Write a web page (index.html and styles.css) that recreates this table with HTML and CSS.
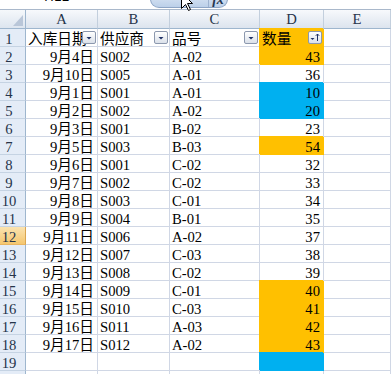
FILE: index.html
```html
<!DOCTYPE html>
<html lang="zh">
<head>
<meta charset="utf-8">
<title>Sheet</title>
<link rel="stylesheet" href="styles.css">
</head>
<body>
<div class="topbar">
  <div class="namebox"><span class="nametext">H12</span></div>
  <div class="fxtab"><div class="fxleft"></div><div class="fxright"><span class="fxtext">fx</span></div></div>
  <svg class="cursor" width="13" height="20" viewBox="0 0 13 20"><path d="M0.5 0.5 L0.5 16.5 L4.5 12.5 L7.5 18.5 L9.5 17.5 L6.5 11.5 L11.5 11.5 Z" fill="#fff" stroke="#000" stroke-width="1"/></svg>
</div>
<div class="sheet">
  <div class="corner"><svg width="25" height="18" viewBox="0 0 25 18"><path d="M23 5 L23 16 L13 16 Z" fill="#b9c6d8"/></svg></div>
  <div class="ch">A</div><div class="ch">B</div><div class="ch">C</div><div class="ch">D</div><div class="ch">E</div>

  <div class="rh">1</div>
  <div class="c">入库日期<span class="fbtn"><svg width="12" height="11" viewBox="0 0 12 11"><path d="M3.5 5 H8.5 L6 7.5 Z" fill="#1f3166"/></svg></span></div>
  <div class="c">供应商<span class="fbtn"><svg width="12" height="11" viewBox="0 0 12 11"><path d="M3.5 5 H8.5 L6 7.5 Z" fill="#1f3166"/></svg></span></div>
  <div class="c">品号<span class="fbtn"><svg width="12" height="11" viewBox="0 0 12 11"><path d="M3.5 5 H8.5 L6 7.5 Z" fill="#1f3166"/></svg></span></div>
  <div class="c o">数量<span class="fbtn"><svg width="12" height="11" viewBox="0 0 12 11"><path d="M1.5 6 H5.5 L3.5 8 Z" fill="#1f3166"/><path d="M8.5 9 V2 M6.8 3.8 L8.5 2 L10.2 3.8" fill="none" stroke="#1f3166" stroke-width="1"/></svg></span></div>
  <div class="c"></div>

  <div class="rh">2</div><div class="c r">9月4日</div><div class="c">S002</div><div class="c">A-02</div><div class="c r o">43</div><div class="c"></div>
  <div class="rh">3</div><div class="c r">9月10日</div><div class="c">S005</div><div class="c">A-01</div><div class="c r">36</div><div class="c"></div>
  <div class="rh">4</div><div class="c r">9月1日</div><div class="c">S001</div><div class="c">A-01</div><div class="c r b">10</div><div class="c"></div>
  <div class="rh">5</div><div class="c r">9月2日</div><div class="c">S002</div><div class="c">A-02</div><div class="c r b">20</div><div class="c"></div>
  <div class="rh">6</div><div class="c r">9月3日</div><div class="c">S001</div><div class="c">B-02</div><div class="c r">23</div><div class="c"></div>
  <div class="rh">7</div><div class="c r">9月5日</div><div class="c">S003</div><div class="c">B-03</div><div class="c r o">54</div><div class="c"></div>
  <div class="rh">8</div><div class="c r">9月6日</div><div class="c">S001</div><div class="c">C-02</div><div class="c r">32</div><div class="c"></div>
  <div class="rh">9</div><div class="c r">9月7日</div><div class="c">S002</div><div class="c">C-02</div><div class="c r">33</div><div class="c"></div>
  <div class="rh">10</div><div class="c r">9月8日</div><div class="c">S003</div><div class="c">C-01</div><div class="c r">34</div><div class="c"></div>
  <div class="rh">11</div><div class="c r">9月9日</div><div class="c">S004</div><div class="c">B-01</div><div class="c r">35</div><div class="c"></div>
  <div class="rh sel">12</div><div class="c r">9月11日</div><div class="c">S006</div><div class="c">A-02</div><div class="c r">37</div><div class="c"></div>
  <div class="rh">13</div><div class="c r">9月12日</div><div class="c">S007</div><div class="c">C-03</div><div class="c r">38</div><div class="c"></div>
  <div class="rh">14</div><div class="c r">9月13日</div><div class="c">S008</div><div class="c">C-02</div><div class="c r">39</div><div class="c"></div>
  <div class="rh">15</div><div class="c r">9月14日</div><div class="c">S009</div><div class="c">C-01</div><div class="c r o">40</div><div class="c"></div>
  <div class="rh">16</div><div class="c r">9月15日</div><div class="c">S010</div><div class="c">C-03</div><div class="c r o">41</div><div class="c"></div>
  <div class="rh">17</div><div class="c r">9月16日</div><div class="c">S011</div><div class="c">A-03</div><div class="c r o">42</div><div class="c"></div>
  <div class="rh">18</div><div class="c r">9月17日</div><div class="c">S012</div><div class="c">A-02</div><div class="c r o">43</div><div class="c"></div>
  <div class="rh">19</div><div class="c"></div><div class="c"></div><div class="c"></div><div class="c b"></div><div class="c"></div>
  <div class="rh"></div><div class="c"></div><div class="c"></div><div class="c"></div><div class="c"></div><div class="c"></div>
</div>
</body>
</html>
```
FILE: styles.css
```css
html, body {
  margin: 0;
  padding: 0;
  background: #ffffff;
}
body {
  width: 391px;
  height: 374px;
  overflow: hidden;
  font-family: "Liberation Serif", "Noto Sans CJK SC", serif;
  font-size: 14.67px;
  color: #000;
}

/* top strip: name box + formula button */
.topbar {
  position: relative;
  height: 9px;
  border-bottom: 1px solid #a9b8cb;
  display: flex;
  align-items: flex-start;
  background: #ffffff;
}
.namebox {
  width: 114px;
  height: 9px;
  overflow: hidden;
  text-align: center;
}
.nametext {
  display: block;
  margin-top: -10px;
  font-family: "Liberation Sans", sans-serif;
  font-size: 13px;
  line-height: 14px;
  letter-spacing: 0.5px;
}
.fxtab {
  margin-left: 36px;
  margin-top: -10px;
  width: 78px;
  height: 18px;
  box-sizing: border-box;
  border: 1px solid #8ea6c6;
  border-top: none;
  border-radius: 0 0 9px 9px;
  background: linear-gradient(#e4edf8, #bcd0e9);
  display: flex;
  overflow: hidden;
}
.fxleft {
  width: 57px;
  border-right: 1px solid #9db2cf;
}
.fxright {
  flex: 1;
  text-align: center;
}
.fxtext {
  display: block;
  margin-top: 3px;
  font-family: "Liberation Serif", serif;
  font-style: italic;
  font-weight: bold;
  font-size: 14px;
  line-height: 14px;
  color: #24364f;
}
.cursor {
  position: absolute;
  left: 181px;
  top: -8px;
}

/* sheet grid */
.sheet {
  display: grid;
  grid-template-columns: 26px 72px 72px 90px 64px 67px;
  grid-template-rows: 19px;
  grid-auto-rows: 18px;
}
.corner {
  box-sizing: border-box;
  background: linear-gradient(#f5f8fb, #dde5ef);
  border-right: 1px solid #9eb6ce;
  border-bottom: 1px solid #9eb6ce;
}
.corner svg {
  display: block;
}
.ch {
  box-sizing: border-box;
  background: linear-gradient(#f7f9fc, #dce4ee);
  border-right: 1px solid #c3cfdd;
  border-bottom: 1px solid #9eb6ce;
  text-align: center;
  line-height: 16px;
  padding-top: 1px;
  color: #26344a;
}
.rh {
  box-sizing: border-box;
  background: #e4ecf7;
  border-right: 1px solid #9eb6ce;
  border-bottom: 1px solid #c5d3e3;
  text-align: center;
  padding-right: 7px;
  line-height: 17px;
  padding-top: 2px;
  color: #26344a;
}
.rh.sel {
  background: linear-gradient(#fbe3b0, #f5c770);
  border-bottom-color: #e9b562;
  border-right-color: #d9a550;
}
.c {
  position: relative;
  box-sizing: border-box;
  border-right: 1px solid #d0d7e5;
  border-bottom: 1px solid #d0d7e5;
  padding: 2px 3px 0 2px;
  line-height: 17px;
  white-space: nowrap;
}
.c.r {
  text-align: right;
}
.c.o {
  background: #ffc000;
  border-color: #ffc000;
  box-shadow: -1px -1px 0 0 #ffc000;
}
.c.b {
  background: #00b0f0;
  border-color: #00b0f0;
  box-shadow: -1px -1px 0 0 #00b0f0;
}

/* autofilter buttons */
.fbtn {
  position: absolute;
  right: 1px;
  top: 2px;
  width: 14px;
  height: 13px;
  box-sizing: border-box;
  border: 1px solid #8c98ae;
  border-radius: 2px;
  background: linear-gradient(#ffffff, #dbe1ea);
}
.fbtn svg {
  display: block;
}
```
